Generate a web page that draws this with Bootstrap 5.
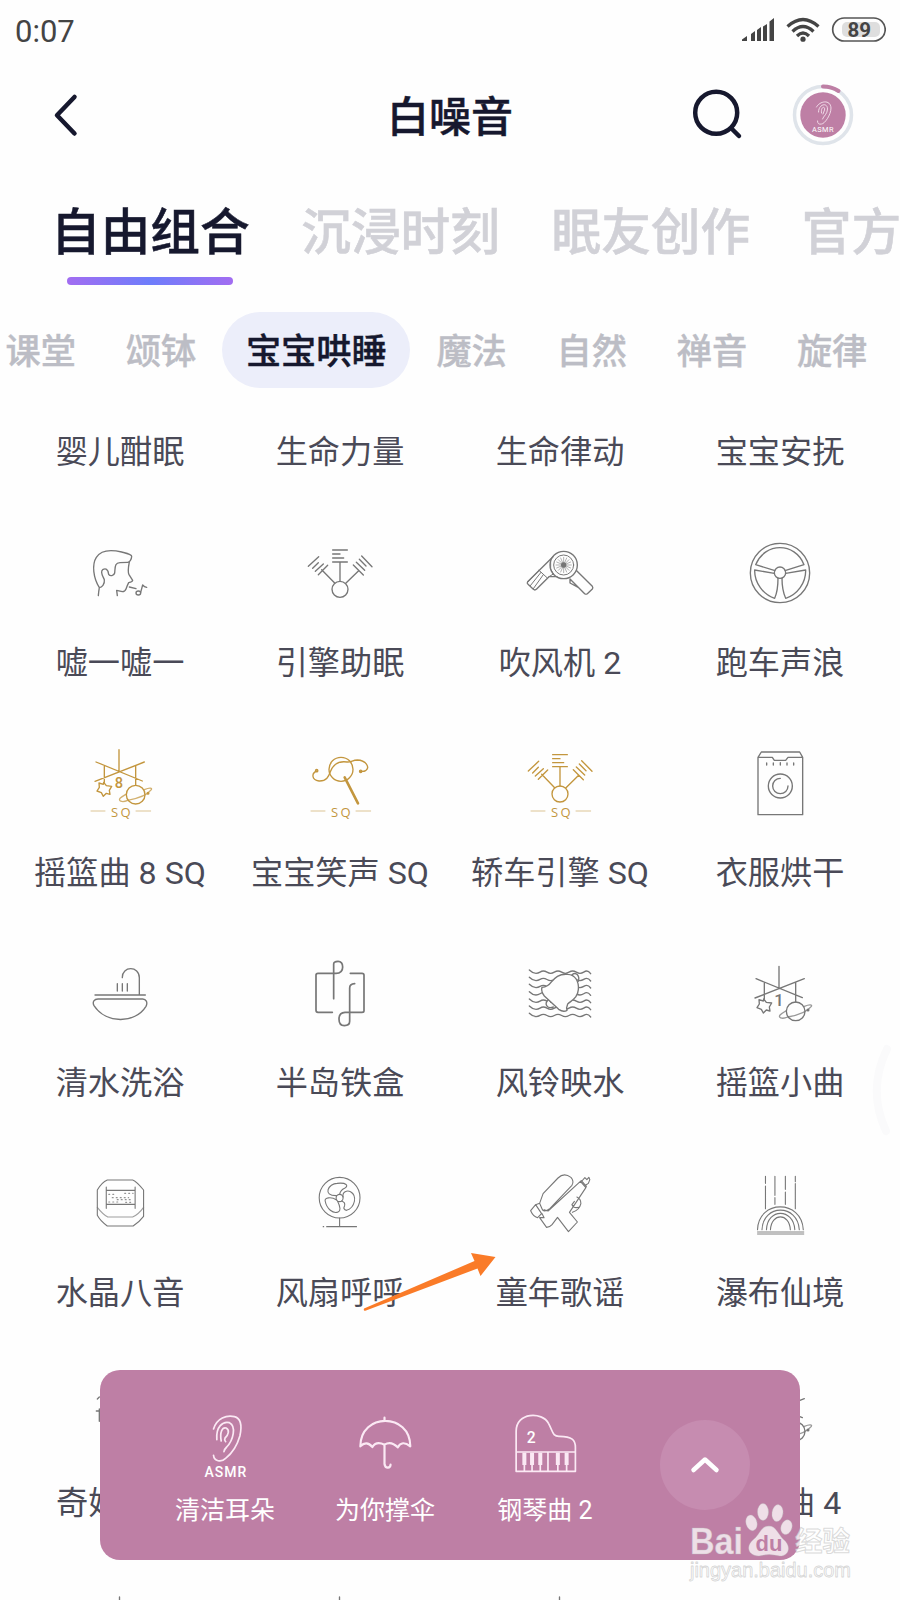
<!DOCTYPE html>
<html lang="zh-CN">
<head>
<meta charset="utf-8">
<meta name="viewport" content="width=device-width, initial-scale=1">
<title>白噪音</title>
<link href="https://cdn.jsdelivr.net/npm/bootstrap@5.3.0/dist/css/bootstrap.min.css" rel="stylesheet">
<style>
  body { font-family: Roboto, "Noto Sans CJK SC", sans-serif; color: #16182e; background: #fefefe; }
  .phone { width: 900px; height: 1600px; }
  svg { display: block; flex: none; fill: none; stroke: #777; stroke-width: 1.35px; stroke-linecap: round; stroke-linejoin: round; }
  path, circle, ellipse, rect { vector-effect: non-scaling-stroke; }
  svg text { stroke: none; }
  .status { height: 60px; padding: 0 14px 0 15px; }
  .clock { font-size: 31px; line-height: 56px; padding-top: 4px; color: #444; }
  .topbar { height: 110px; padding: 0 46px 0 52px; }
  .title { font-size: 42px; font-weight: 500; line-height: 60px; padding-top: 6px; -webkit-text-stroke: .5px; }
  .tabs { height: 142px; padding: 25px 0 0 51px; gap: 51.5px; font-size: 49.7px; line-height: 76px; font-weight: 500; color: #d1d1d7; -webkit-text-stroke: .5px; }
  .tab-on { color: #16182e; }
  .tab-on::after { content: ""; display: block; width: 166px; height: 8px; margin: 6px auto 0; border-radius: 4px; background: linear-gradient(90deg, #a26df1, #6e7dfb 50%, #a26df1); }
  .cats { height: 76px; gap: 2.6px; margin-left: -18px; font-size: 35.2px; line-height: 80px; font-weight: 500; color: #bcbdc5; -webkit-text-stroke: .4px; }
  .cats > span { height: 76px; padding: 0 23.6px; }
  .cat-on { background: #eceefa; color: #16182e; border-radius: 38px; }
  .sounds { padding: 0 10px; font-size: 32.2px; line-height: 40px; color: #4a4a57; }
  .cell { width: 220px; height: 210px; }
  .cell-first { height: 84px; }
  .sound-rows { margin-top: 61px; }
  .tag { margin-top: 30px; white-space: pre; font-weight: 400; }
  .ico { width: 80px; height: 80px; }
  .fine { stroke-width: 1.1px; }
  .gold { stroke: #c3963e; color: #c3963e; }
  .player { left: 100px; top: 1370px; width: 700px; height: 190px; border-radius: 20px; background: #be7fa5; color: #fff; padding-left: 45px; }
  .player svg { stroke: #fbe9f4; stroke-width: 1.7px; }
  .player .slot { width: 160px; padding-top: 35px; font-size: 25px; line-height: 34px; }
  .player .slot div { margin-top: 9px; }
  .expand { width: 90px; height: 90px; margin: 50px 0 0 35px; border-radius: 50%; background: #c68cb0; }
  .arrow { left: 355px; top: 1245px; }
  .edge { left: 868px; top: 1040px; }
  .brand { left: 685px; top: 1495px; }
</style>
</head>
<body>
<svg width="0" height="0" class="position-absolute">
  <defs>
    <symbol id="mobile" viewBox="60 40 240 240">
      <path d="M177 60V126M108 97L247 154M105 155L253 97M133 110V158M227 108V167"/>
      <circle cx="227" cy="195" r="28"/>
      <path d="M131 158L139 168L155 170L148 182L150 194L139 191L130 200L124 189L111 184L118 173L117 160L130 164Z"/>
      <path stroke-opacity=".75" d="M203 212C185 220 173 213 181 205C187 200 194 196 199 193M253 180C270 173 277 175 274 180C260 199 225 208 203 212"/>
      <circle cx="264" cy="191" r="2.5"/>
    </symbol>
    <symbol id="pistons" viewBox="60 40 240 240">
      <path d="M158 91H202M158 103H180M158 115H191M158 127H202M180 127V185"/>
      <circle cx="180" cy="209" r="24"/>
      <path d="M125 150L164 190M85 140L116 111M98 146L115 129M106 155L130 133M115 165L143 137"/>
      <path d="M236 153L198 190M245 109L276 141M238 119L258 139M229 128L254 152M220 136L250 166"/>
    </symbol>
    <symbol id="sq" viewBox="60 40 240 240">
      <text x="186" y="262" font-size="39" text-anchor="middle" letter-spacing="7" fill="currentColor" font-family="Open Sans, sans-serif">SQ</text>
      <path stroke-opacity=".55" style="stroke-width:1px" d="M93 244H135M228 244H272"/>
    </symbol>
  </defs>
</svg>

<main class="phone position-relative overflow-hidden">
  <div class="status d-flex justify-content-between align-items-center">
    <span class="clock">0:07</span>
    <svg width="146" height="30" viewBox="740 15 146 30">
      <g style="fill:#444;stroke:none"><path d="M742 41V39.500L747 36V41ZM751 41V34L755 31V41ZM757 41V30L761 27V41ZM763 41V26.500L767 24V41ZM769.500 41V21.500L774 18V41Z"/><circle cx="803" cy="39.200" r="2.600"/></g>
      <g style="stroke:#444;stroke-width:3.300px;stroke-linecap:butt"><path d="M787.500 26.500Q803 12.500 818.500 26.500M792.500 31.500Q803 21.500 813.500 31.500M797 36Q803 30 809 36"/></g>
      <rect x="842" y="22" width="38" height="15" rx="5" style="fill:#dedede;stroke:none"/>
      <rect x="832.700" y="18" width="52.500" height="23" rx="11.500" style="stroke:#555;stroke-width:1.700px"/>
      <text x="859.200" y="37" font-size="20.500" font-weight="700" text-anchor="middle" fill="#444">89</text>
    </svg>
  </div>

  <header class="topbar position-relative d-flex align-items-center justify-content-between">
    <svg width="30" height="50" viewBox="52 90 30 50" style="stroke:#16182e;stroke-width:4.500px"><path d="M74.500 97L57 115.300L74.500 133.500"/></svg>
    <div class="title position-absolute start-50 translate-middle-x">白噪音</div>
    <div class="d-flex align-items-center">
      <svg width="60" height="60" viewBox="683.500 84.500 60 60" style="stroke:#16182e;stroke-width:4.500px"><circle cx="715.700" cy="112.300" r="21"/><path d="M732 129L738.500 135.500"/></svg>
      <svg width="62" height="62" viewBox="791.500 84 62 62" class="ms-5">
        <circle cx="822.500" cy="115" r="28.500" style="stroke:#dfe4ea;stroke-width:3.500px"/>
        <path d="M822.500 86.500A28.500 28.500 0 0 1 838 91" style="stroke:#be7fa5;stroke-width:4px"/>
        <circle cx="822.500" cy="115" r="22.700" style="fill:#be7fa5;stroke:none"/>
        <g style="stroke:#f5e3ee;stroke-width:.9px"><path d="M816 107C819 101 830 99 830.500 108C830.500 115 824 124 821 124Q817 125 817 121M818 112C818 104 827 102 827 109C827 114 823 116 822 119M821 113C820 106 825 106 824 110L822.500 114"/></g>
        <text x="822.500" y="132.400" font-size="7.400" letter-spacing=".4" text-anchor="middle" fill="#fff">ASMR</text>
      </svg>
    </div>
  </header>

  <nav class="tabs d-flex text-nowrap">
    <span class="tab-on">自由组合</span><span>沉浸时刻</span><span>眠友创作</span><span>官方</span>
  </nav>

  <nav class="cats d-flex text-nowrap">
    <span>课堂</span><span>颂钵</span><span class="cat-on">宝宝哄睡</span><span>魔法</span><span>自然</span><span>禅音</span><span>旋律</span>
  </nav>

  <section class="sounds d-flex flex-wrap text-center">
    <div class="cell cell-first d-flex flex-column align-items-center"><div class="tag mt-auto">婴儿酣眠</div></div>
    <div class="cell cell-first d-flex flex-column align-items-center"><div class="tag mt-auto">生命力量</div></div>
    <div class="cell cell-first d-flex flex-column align-items-center"><div class="tag mt-auto">生命律动</div></div>
    <div class="cell cell-first d-flex flex-column align-items-center"><div class="tag mt-auto">宝宝安抚</div></div>
  </section>

  <section class="sounds sound-rows d-flex flex-wrap text-center">
    <!-- head whistling -->
    <div class="cell d-flex flex-column align-items-center">
      <svg class="ico" viewBox="60 40 240 240"><path d="M115 228Q116 215 118 204C100 175 95 135 109 113C125 88 160 91 185 97C200 101 215 104 215 110C215 120 208 128 203 128L180 129C164 130 166 140 164 160C162 169 150 170 146 164C144 148 137 145 128 150C119 157 130 172 133 180C135 194 125 203 118 204M208 127C205 142 203 157 207 165L218 182Q218 187 206 189Q202 197 198 208Q195 216 187 216L170 212L172 228M208 202L228 207M242 218L248 196Q253 202 260 203"/><ellipse cx="235" cy="220" rx="7" ry="6"/></svg>
      <div class="tag">嘘一嘘一</div>
    </div>
    <div class="cell d-flex flex-column align-items-center">
      <svg class="ico"><use href="#pistons"/></svg>
      <div class="tag">引擎助眠</div>
    </div>
    <!-- hair dryer -->
    <div class="cell d-flex flex-column align-items-center">
      <svg class="ico" viewBox="60 40 240 240"><circle cx="191" cy="136" r="41"/><circle cx="191" cy="136" r="30" style="stroke-width:1px"/><circle cx="191" cy="136" r="6" style="fill:#777"/><path style="stroke-width:.7px" stroke-opacity=".8" d="M191 113V159M168 136H214M175 120L207 152M175 152L207 120M182 115L200 157M170 127L212 145M212 127L170 145M200 115L182 157"/><path d="M159 111L83 186Q80 191 84 194L100 209Q105 213 110 208L147 171H171M230 153L277 200Q280 204 277 208L262 222Q258 225 254 222L210 178V190L236 204"/><path style="stroke-width:1px" d="M152 122L152 148L160 163M117 152L141 174M117 152L84 187M123 158L91 198M130 165L100 207M147 171L160 163"/></svg>
      <div class="tag">吹风机 2</div>
    </div>
    <!-- steering wheel -->
    <div class="cell d-flex flex-column align-items-center">
      <svg class="ico" viewBox="720 40 240 240"><circle cx="840" cy="160" r="89"/><circle cx="840" cy="159" r="17"/><path d="M767 135C795 67 885 67 912 135L855 153M767 135L825 153M764 151L823 161M764 151C763 190 790 225 824 236C833 216 834 197 834 176M917 151L857 161M917 151C918 190 892 225 857 236C848 216 846 197 846 176"/></svg>
      <div class="tag">跑车声浪</div>
    </div>

    <div class="cell d-flex flex-column align-items-center">
      <svg class="ico gold" viewBox="60 40 240 240"><use href="#mobile" x="60" y="40" width="240" height="240"/><use href="#sq" x="60" y="40" width="240" height="240"/><text x="177" y="176" font-size="44" text-anchor="middle" font-weight="500" fill="currentColor">8</text></svg>
      <div class="tag">摇篮曲 8 SQ</div>
    </div>
    <!-- rattle with ribbon -->
    <div class="cell d-flex flex-column align-items-center">
      <svg class="ico gold" viewBox="720 40 240 240"><circle cx="843" cy="119" r="36"/><path d="M770 124C755 130 753 150 777 154C800 155 806 140 811 126C820 102 840 94 861 97C875 98 877 91 892 91C918 92 930 113 918 122Q912 126 902 125"/><circle cx="770" cy="123" r="3.500"/><circle cx="902" cy="125" r="3.500"/><path d="M854 143L894 221" style="stroke-width:2.600px"/><use href="#sq" x="720" y="40" width="240" height="240"/></svg>
      <div class="tag">宝宝笑声 SQ</div>
    </div>
    <div class="cell d-flex flex-column align-items-center">
      <svg class="ico gold" viewBox="60 40 240 240"><use href="#pistons" x="60" y="24" width="240" height="240"/><use href="#sq" x="60" y="40" width="240" height="240"/></svg>
      <div class="tag">轿车引擎 SQ</div>
    </div>
    <!-- washing machine -->
    <div class="cell d-flex flex-column align-items-center">
      <svg class="ico" viewBox="720 40 240 240"><path d="M774 83L784 67H899L908 83V255H774ZM774 83H817L823 92H857L864 83H908M800 100V106M820 100V106M841 99V106M861 100V106M881 100V106"/><circle cx="841" cy="169" r="36"/><path d="M841 146A23 23 0 1 0 864 169"/></svg>
      <div class="tag">衣服烘干</div>
    </div>

    <!-- basin -->
    <div class="cell d-flex flex-column align-items-center">
      <svg class="ico" viewBox="60 40 240 240"><path d="M187 114C186 78 238 78 238 114V165M105 166H256M172 132V154M187 132V154M202 132V154M114 178H248C258 178 264 188 258 200C225 253 138 253 102 198C96 187 103 178 114 178Z"/></svg>
      <div class="tag">清水洗浴</div>
    </div>
    <div class="cell d-flex flex-column align-items-center">
      <svg class="ico" viewBox="720 40 240 240"><path style="stroke-width:1.700px" d="M817 218H774Q768 218 768 212V106Q768 101 774 101H828Q848 101 848 82Q848 65 834 65Q821 65 821 73V177M871 101H906Q912 101 912 107V213Q912 218 906 218H855Q837 219 837 238Q837 258 853 258Q869 258 869 245V145Q869 133 884 132"/></svg>
      <div class="tag">半岛铁盒</div>
    </div>
    <!-- bell over waves -->
    <div class="cell d-flex flex-column align-items-center">
      <svg class="ico" viewBox="60 40 240 240">
        <path d="M88 91q10 10 20 10c12 0 12-7 22-7s12 7 22 7 12-7 22-7 12 7 22 7 12-7 22-7 12 7 22 7 12-7 20-7q6 0 12 8M88 113q10 10 20 10c12 0 12-7 22-7s12 7 22 7 12-7 22-7 12 7 22 7 12-7 22-7 12 7 22 7 12-7 20-7q6 0 12 8M88 134q10 10 20 10c12 0 12-7 22-7s12 7 22 7 12-7 22-7 12 7 22 7 12-7 22-7 12 7 22 7 12-7 20-7q6 0 12 8M88 156q10 10 20 10c12 0 12-7 22-7s12 7 22 7 12-7 22-7 12 7 22 7 12-7 22-7 12 7 22 7 12-7 20-7q6 0 12 8M88 178q10 10 20 10c12 0 12-7 22-7s12 7 22 7 12-7 22-7 12 7 22 7 12-7 22-7 12 7 22 7 12-7 20-7q6 0 12 8M88 221q10 10 20 10c12 0 12-7 22-7s12 7 22 7 12-7 22-7 12 7 22 7 12-7 22-7 12 7 22 7 12-7 20-7q6 0 12 8M88 199q10 10 20 10c12 0 12-7 22-7s12 7 22 7 12-7 22-7 12 7 22 7 12-7 22-7 12 7 22 7 12-7 20-7q6 0 12 8"/>
        <path fill="#fefefe" d="M145 180C131 193 142 209 160 202"/>
        <path fill="#fefefe" d="M126 143Q144 141 153 128C165 114 176 102 203 104C226 105 237 125 235 150C233 174 218 180 203 193Q198 205 201 212Q190 219 176 209L133 169Q122 155 126 143Z"/>
        <path d="M216 105C229 95 240 109 235 125"/></svg>
      <div class="tag">风铃映水</div>
    </div>
    <div class="cell d-flex flex-column align-items-center">
      <svg class="ico" viewBox="60 40 240 240"><use href="#mobile" x="60" y="60" width="240" height="240"/><text x="177" y="200" font-size="50" font-weight="500" text-anchor="middle" fill="#777">1</text></svg>
      <div class="tag">摇篮小曲</div>
    </div>

    <!-- crystal music box -->
    <div class="cell d-flex flex-column align-items-center">
      <svg class="ico fine" preserveAspectRatio="none" viewBox="40.2 40 160.8 240"><path d="M95 91H146Q153 94 168 121V200Q160 216 147 229H95Q81 214 75 197V121Q84 98 95 91ZM93 112V176M151 112V176M93 122H151M93 164H151"/><path stroke-opacity=".7" d="M75 173Q86 194 96 202H146Q158 194 168 173"/><path stroke-dasharray="1 3" stroke-opacity=".8" d="M98 134H111M130 131H147M105 144H138M115 150H147M98 157H120M132 158H147"/></svg>
      <div class="tag">水晶八音</div>
    </div>
    <!-- fan -->
    <div class="cell d-flex flex-column align-items-center">
      <svg class="ico fine" preserveAspectRatio="none" viewBox="482.4 40 160.8 240"><ellipse cx="562" cy="144" rx="41" ry="61"/><ellipse cx="562" cy="145" rx="7" ry="11"/><path d="M556 138C526 139 540 101 557 101C576 98 581 108 572 116Q564 121 562 134M556 151C545 140 531 144 533 154C536 178 549 193 559 187Q567 182 558 155M569 142C567 126 577 121 584 126C598 138 593 174 576 182Q568 180 572 168Q574 158 566 154M562 205V230M536 231H596M529 231H530"/></svg>
      <div class="tag">风扇呼呼</div>
    </div>
    <!-- water gun -->
    <div class="cell d-flex flex-column align-items-center">
      <svg class="ico fine" preserveAspectRatio="none" viewBox="924.6 40 160.8 240"><path d="M964 161L971 132L1001 85Q1013 67 1027 83Q1034 95 1029 107L985 176Q972 191 969 178L964 161L956 165L946 183Q951 200 960 204L968 192L956 165M964 204L978 233Q985 232 989 225L1000 203L1022 246L1040 217L1024 188L1057 114L1046 95L981 184M1046 95L1048 93L1058 110L1057 114M1049 94L1055 84L1059 90L1063 83L1065 90L1062 101L1057 106M1039 142Q1047 147 1047 162Q1044 181 1030 188M1034 155L1029 165Q1033 177 1042 173M969 192L973 204L964 204M981 184L973 180"/></svg>
      <div class="tag">童年歌谣</div>
    </div>
    <!-- waterfall -->
    <div class="cell d-flex flex-column align-items-center">
      <svg class="ico fine" preserveAspectRatio="none" viewBox="1366.8 40 160.8 240"><path d="M1418 80V101M1418 109V177M1437 80V137M1437 144V164M1458 80V119M1458 127V164M1478 80V96M1478 102V177M1402 240C1404 149 1491 149 1494 240M1411 240C1413 162 1483 162 1486 240M1420 240C1422 175 1474 175 1477 240M1428 240C1430 189 1466 189 1468 240"/><path style="stroke-width:.9px" d="M1402 247H1495M1402 253H1495"/></svg>
      <div class="tag">瀑布仙境</div>
    </div>

    <div class="cell d-flex flex-column">
      <svg class="ico mx-auto" viewBox="60 40 240 240"><path d="M112 118L118 112M109 154H118M118 148V185"/></svg>
      <div class="tag text-start" style="padding-left:46px">奇妙</div>
    </div>
    <div class="cell"></div>
    <div class="cell"></div>
    <div class="cell d-flex flex-column align-items-center">
      <svg class="ico" viewBox="60 40 240 240"><use href="#mobile" x="60" y="60" width="240" height="240"/></svg>
      <div class="tag">摇篮曲 4</div>
    </div>

    <div class="cell d-flex justify-content-center"><svg class="ico" viewBox="-40 0 80 80"><path d="M-.5 14V60"/></svg></div>
    <div class="cell d-flex justify-content-center"><svg class="ico" viewBox="-40 0 80 80"><path d="M-.5 14V60"/></svg></div>
    <div class="cell d-flex justify-content-center"><svg class="ico" viewBox="-40 0 80 80"><path d="M-.5 14V60"/></svg></div>
  </section>

  <svg class="edge position-absolute" width="32" height="100" viewBox="868 1040 32 100"><path d="M887 1049Q867 1090 886 1131" style="stroke:#fafafb;stroke-width:8px"/></svg>

  <svg class="arrow position-absolute" width="145" height="72" viewBox="355 1245 145 72"><path d="M495.500 1257L471 1253L474.500 1261L364 1308.500Q363 1311.500 366 1310.500L477.500 1268.500L480.500 1276Z" style="fill:#fa7b28;stroke:none"/></svg>

  <aside class="player position-absolute d-flex text-center">
    <div class="slot d-flex flex-column align-items-center">
      <svg class="ico" preserveAspectRatio="none" viewBox="264 165 145.8 240"><path d="M316 237C322 205 340 194 354 200C366 205 368 228 364 258C358 292 346 315 338 325C330 338 317 334 316 316M322 269C320 230 333 213 345 218C358 229 352 270 340 291Q336 297 335 305M330 273C327 246 332 231 339 234C346 240 343 255 337 264Q335 270 338 275"/><text transform="translate(338.500 382) scale(.6077 1)" font-size="42" font-weight="500" text-anchor="middle" letter-spacing="3" fill="#fff">ASMR</text></svg>
      <div>清洁耳朵</div>
    </div>
    <div class="slot d-flex flex-column align-items-center">
      <svg class="ico" preserveAspectRatio="none" viewBox="556 165 145.8 240"><path style="stroke-width:2.200px" d="M628 203V210M584 289C584 187 675 187 675 289Q660 269 652 292Q640 272 628 284Q613 272 606 291Q595 270 584 289M628 284V342Q629 353 634 353Q639 352 639 344"/></svg>
      <div>为你撑伞</div>
    </div>
    <div class="slot d-flex flex-column align-items-center">
      <svg class="ico" preserveAspectRatio="none" viewBox="847.7 165 145.8 240"><path d="M868 364V244C868 185 916 185 927 220C935 244 934 260 947 259C970 259 976 270 976 292V364ZM868 306H976M926 306V364M883 345V364M897 345V364M912 345V364M944 345V364M960 345V364"/><path style="stroke-width:4px;stroke-linecap:butt" d="M883 308V345M897 308V345M912 308V345M944 308V345M960 308V345"/><text transform="translate(895.500 278) scale(.55 1)" font-size="52" font-weight="500" text-anchor="middle" fill="#fff">2</text></svg>
      <div>钢琴曲 2</div>
    </div>
    <div class="expand d-flex align-items-center justify-content-center">
      <svg width="34" height="24" viewBox="0 0 34 24" style="stroke:#fff;stroke-width:4.500px"><path d="M5.500 17L17 6.500L28.500 17"/></svg>
    </div>
  </aside>

  <svg class="brand position-absolute" width="180" height="92" viewBox="685 1495 180 92" style="stroke:none">
    <g style="fill:#fff;fill-opacity:.75;stroke:#bbb;stroke-opacity:.35;stroke-width:1px">
      <text x="690" y="1553.500" font-size="36" font-weight="700" textLength="53" lengthAdjust="spacingAndGlyphs" style="stroke:#bbb;stroke-opacity:.35;stroke-width:1px" font-family="Liberation Sans, sans-serif">Bai</text>
      <ellipse cx="751.500" cy="1523" rx="5.500" ry="8" transform="rotate(-15 751 1523)"/><ellipse cx="763" cy="1512" rx="5.500" ry="8.500"/><ellipse cx="777.500" cy="1513" rx="5.500" ry="8.500" transform="rotate(8 777 1513)"/><ellipse cx="786.500" cy="1527" rx="5.500" ry="7.500" transform="rotate(18 786 1527)"/>
      <path d="M769 1526C776 1526 778 1534 783 1539C792 1546 789 1556 780 1556Q769 1553 759 1556C748 1556 745 1546 754 1539C760 1534 761 1526 769 1526Z"/>
      <text x="795" y="1551" font-size="27.500" font-weight="700" style="stroke:#bbb;stroke-opacity:.55;stroke-width:1px">经验</text>
      <text x="690" y="1577" font-size="20" textLength="161" lengthAdjust="spacingAndGlyphs" style="fill:#fff;stroke:#ccc;stroke-opacity:.8;stroke-width:.8px" font-family="Liberation Sans, sans-serif">jingyan.baidu.com</text>
    </g>
    <text x="769" y="1551" font-size="22" font-weight="700" text-anchor="middle" fill="#be7fa5" font-family="Liberation Sans, sans-serif">du</text>
  </svg>
</main>
<script src="https://cdn.jsdelivr.net/npm/bootstrap@5.3.0/dist/js/bootstrap.bundle.min.js"></script>
</body>
</html>
